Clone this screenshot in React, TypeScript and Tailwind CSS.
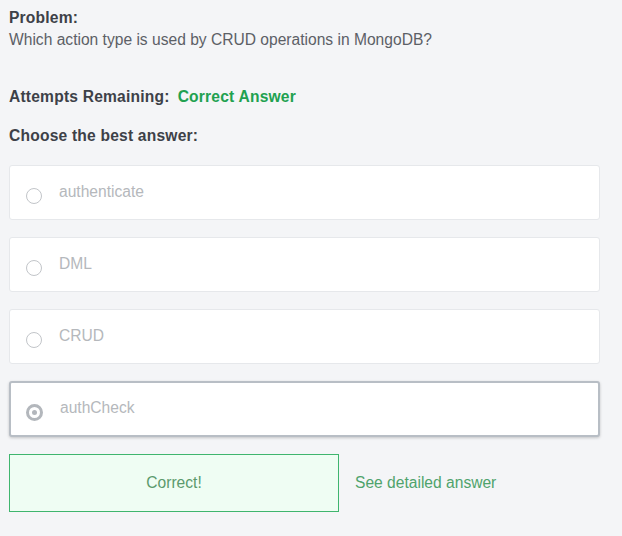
import React from 'react'

const options = [
    { label: 'authenticate', selected: false },
    { label: 'DML', selected: false },
    { label: 'CRUD', selected: false },
    { label: 'authCheck', selected: true },
]

export default function App() {
    return (
        <div className="min-h-screen w-full bg-[#f4f5f7] px-[9px] pt-[8px] text-[15.6px] font-['Liberation_Sans',Arial,sans-serif]">
            <div className="font-bold text-[#3d4148] leading-[20px] tracking-[0.2px]">Problem:</div>
            <div className="text-[#5c6066] leading-[20px] mt-[2px]">Which action type is used by CRUD operations in MongoDB?</div>

            <div className="flex items-center gap-[8px] mt-[37px] font-bold leading-[20px] tracking-[0.2px]">
                <span className="text-[#3d4148]">Attempts Remaining:</span>
                <span className="text-[#21a150]">Correct Answer</span>
            </div>

            <div className="font-bold text-[#3d4148] leading-[20px] mt-[19px] tracking-[0.2px]">Choose the best answer:</div>

            <div className="flex flex-col gap-[17px] mt-[19px] w-[591px]">
                {options.map((o) => (
                    <div
                        key={o.label}
                        className={
                            o.selected
                                ? 'flex items-center h-[56px] bg-white border-2 border-[#b8bec5] rounded-[3px] shadow-[0_1px_3px_rgba(0,0,0,0.2)] pl-[15px]'
                                : 'flex items-center h-[55px] bg-white border border-[#e6e8eb] rounded-[3px] pl-[16px]'
                        }
                    >
                        {o.selected ? (
                            <span className="mt-[6px] flex items-center justify-center w-[17px] h-[17px] rounded-full border-[3px] border-[#b3b7bc]">
                                <span className="w-[5px] h-[5px] rounded-full bg-[#b3b7bc]" />
                            </span>
                        ) : (
                            <span className="mt-[6px] w-[16px] h-[16px] rounded-full border border-[#c2c5c9]" />
                        )}
                        <span className="ml-[17px] mb-[2px] text-[#b5b8bc]">{o.label}</span>
                    </div>
                ))}
            </div>

            <div className="flex items-center mt-[17px]">
                <div className="flex items-center justify-center w-[330px] h-[58px] bg-[#effdf3] border border-[#3fb56e] text-[#5b9a6c]">
                    Correct!
                </div>
                <span className="ml-[16px] text-[#4fa36c]">See detailed answer</span>
            </div>
        </div>
    )
}
